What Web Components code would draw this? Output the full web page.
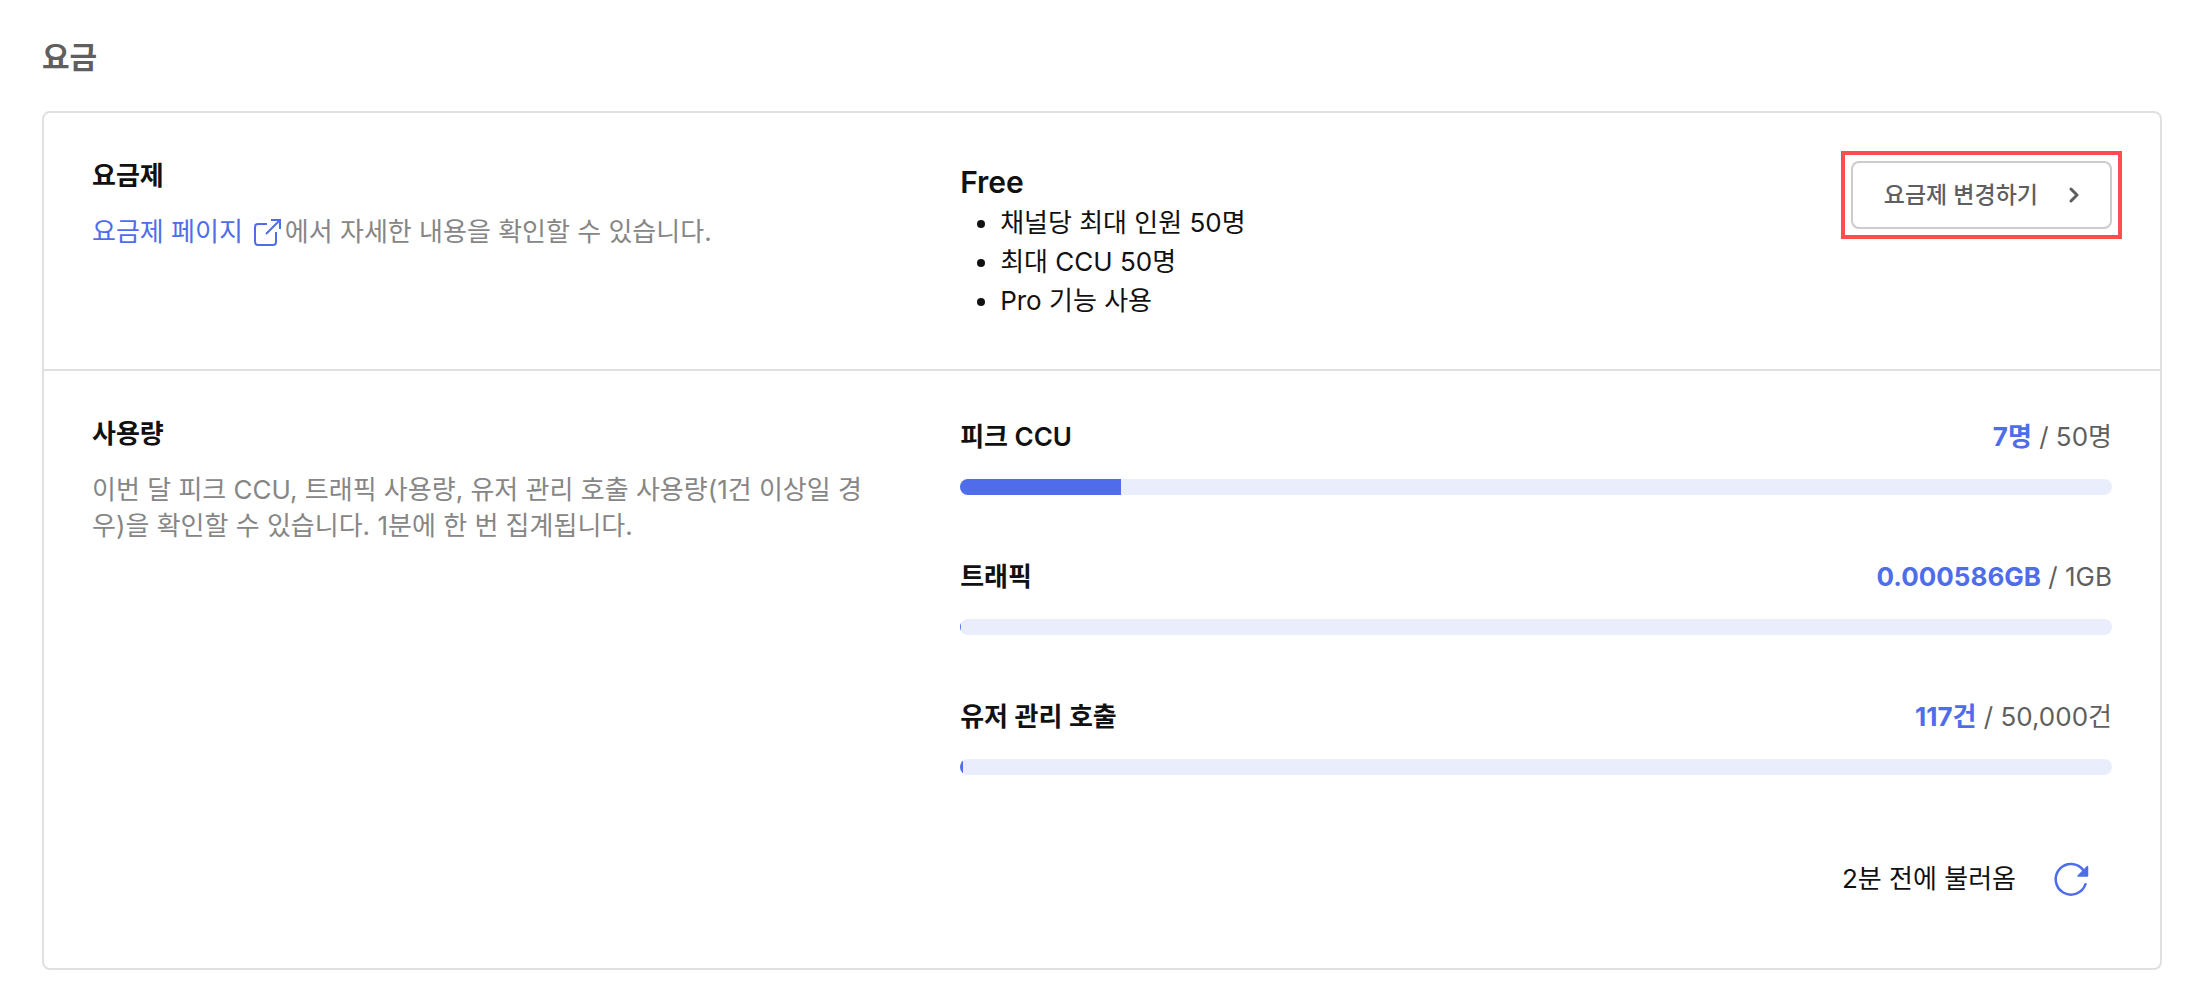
<!DOCTYPE html>
<html lang="ko">
<head>
<meta charset="utf-8">
<meta name="viewport" content="width=device-width, initial-scale=1">
<title>요금</title>
<style>
  :root {
    --ink: #111;
    --ink-sub: #5f5f5f;
    --ink-muted: #868686;
    --accent: #4f6dea;
    --track: #e9edfc;
    --line: #e0e0e0;
    --control-line: #ccc;
    --highlight: #ff4d4f;
  }
  body {
    margin: 0;
    background: #fff;
    color: var(--ink);
    font: 400 26px/36px Inter, "Noto Sans CJK KR", sans-serif;
  }
</style>
</head>
<body>
<billing-page></billing-page>

<script>
const define = (name, html, setup) => {
  const template = document.createElement('template');
  template.innerHTML = html.trim();
  customElements.define(name, class extends HTMLElement {
    constructor() {
      super();
      this.attachShadow({ mode: 'open' }).append(template.content.cloneNode(true));
    }
    connectedCallback() {
      if (setup) setup(this, this.shadowRoot);
    }
  });
};

define('settings-card', `
  <style>
    :host { display: block; border: 2px solid var(--line); border-radius: 8px; }
  </style>
  <slot></slot>
`);

define('settings-row', `
  <style>
    :host {
      display: grid;
      grid-template-columns: 13fr 19fr;
      column-gap: 80px;
      padding: 48px 48px 49px;
    }
    :host(:not(:first-child)) { border-top: 2px solid var(--line); }
    h2 { margin: 0 0 23px; font-size: 26px; line-height: 30px; font-weight: 600; }
    p { margin: 0; color: var(--ink-muted); }
  </style>
  <div>
    <h2><slot name="title"></slot></h2>
    <p><slot name="description"></slot></p>
  </div>
  <div><slot></slot></div>
`);

define('external-link', `
  <style>
    a { color: var(--accent); text-decoration: none; }
    svg { margin: 0 4px 0 11px; vertical-align: -5px; }
  </style>
  <a href="#"><slot></slot><svg width="27" height="28" viewBox="2 0 27 28" fill="none" stroke="currentColor" stroke-width="2" aria-hidden="true"><path d="M15 6H6a3 3 0 0 0-3 3v15a3 3 0 0 0 3 3h15a3 3 0 0 0 3-3V14"/><path d="M14 16 27 3M19 2h9v9"/></svg></a>
`);

define('plan-summary', `
  <style>
    :host { display: flex; justify-content: space-between; align-items: flex-start; }
    h3 { margin: 0; font-size: 30px; line-height: 42px; font-weight: 600; }
    ul { margin: 0; padding-left: 40px; line-height: 39px; }
  </style>
  <div>
    <h3>Free</h3>
    <ul>
      <li>채널당 최대 인원 50명</li>
      <li>최대 CCU 50명</li>
      <li>Pro 기능 사용</li>
    </ul>
  </div>
  <highlight-frame><nav-button>요금제 변경하기</nav-button></highlight-frame>
`);

define('highlight-frame', `
  <style>
    :host { display: block; outline: 4px solid var(--highlight); outline-offset: 6px; }
  </style>
  <slot></slot>
`);

define('nav-button', `
  <style>
    button {
      display: flex;
      align-items: center;
      gap: 29px;
      height: 68px;
      padding: 0 31px;
      border: 2px solid var(--control-line);
      border-radius: 8px;
      background: #fff;
      color: var(--ink-sub);
      font: inherit;
      font-size: 23px;
      font-weight: 500;
    }
  </style>
  <button type="button"><slot></slot><svg width="12" height="18" viewBox="0 0 12 18" fill="none" stroke="currentColor" stroke-width="3" stroke-linecap="round" stroke-linejoin="round" aria-hidden="true"><path d="M4 3l6 6-6 6"/></svg></button>
`);

define('usage-meter', `
  <style>
    :host { display: block; }
    header { display: flex; justify-content: space-between; margin-bottom: 24px; color: var(--ink-sub); }
    .label { color: var(--ink); font-weight: 600; }
    b { color: var(--accent); font-weight: 700; }
    .track { height: 16px; border-radius: 8px; overflow: hidden; background: var(--track); }
    .fill { height: 100%; background: var(--accent); }
  </style>
  <header><span class="label" id="label"></span><span><b></b> / <span class="limit"></span></span></header>
  <div class="track" role="meter" aria-labelledby="label"><div class="fill"></div></div>
`, (host, root) => {
  const { label, used, limit, unit } = host.dataset;
  root.querySelector('.label').textContent = label;
  root.querySelector('b').textContent = used + unit;
  root.querySelector('.limit').textContent = Number(limit).toLocaleString('en-US') + unit;
  root.querySelector('.fill').style.width = used / limit * 100 + '%';
  const track = root.querySelector('.track');
  track.setAttribute('aria-valuenow', used);
  track.setAttribute('aria-valuemax', limit);
});

define('usage-list', `
  <style>
    :host { display: flex; flex-direction: column; gap: 64px; }
  </style>
  <slot></slot>
`);

define('refresh-status', `
  <style>
    :host { display: flex; justify-content: flex-end; align-items: center; margin-top: 64px; }
    button { display: flex; margin-left: 16px; padding: 20px; border: 0; background: none; color: var(--accent); }
  </style>
  <slot></slot>
  <button type="button" aria-label="새로고침"><svg width="40" height="40" viewBox="0 0 40 40" fill="none" aria-hidden="true"><path d="M33.500 25.200A15.300 15.300 0 1 1 31.500 11.500" stroke="currentColor" stroke-width="2.500" stroke-linecap="round"/><path d="M35.500 7.500v9.500h-9.500z" fill="currentColor" stroke="currentColor" stroke-width="1.500" stroke-linejoin="round"/></svg></button>
`);

define('billing-page', `
  <style>
    :host { display: block; padding: 35px 40px 36px 42px; }
    h1 { margin: 0 0 32px; color: var(--ink-sub); font-size: 30px; line-height: 44px; font-weight: 600; }
  </style>
  <h1>요금</h1>
  <settings-card>
    <settings-row>
      <span slot="title">요금제</span>
      <span slot="description"><external-link>요금제 페이지</external-link>에서 자세한 내용을 확인할 수 있습니다.</span>
      <plan-summary></plan-summary>
    </settings-row>
    <settings-row>
      <span slot="title">사용량</span>
      <span slot="description">이번 달 피크 CCU, 트래픽 사용량, 유저 관리 호출 사용량(1건 이상일 경우)을 확인할 수 있습니다. 1분에 한 번 집계됩니다.</span>
      <usage-list>
        <usage-meter data-label="피크 CCU" data-used="7" data-limit="50" data-unit="명"></usage-meter>
        <usage-meter data-label="트래픽" data-used="0.000586" data-limit="1" data-unit="GB"></usage-meter>
        <usage-meter data-label="유저 관리 호출" data-used="117" data-limit="50000" data-unit="건"></usage-meter>
      </usage-list>
      <refresh-status>2분 전에 불러옴</refresh-status>
    </settings-row>
  </settings-card>
`);
</script>
</body>
</html>
